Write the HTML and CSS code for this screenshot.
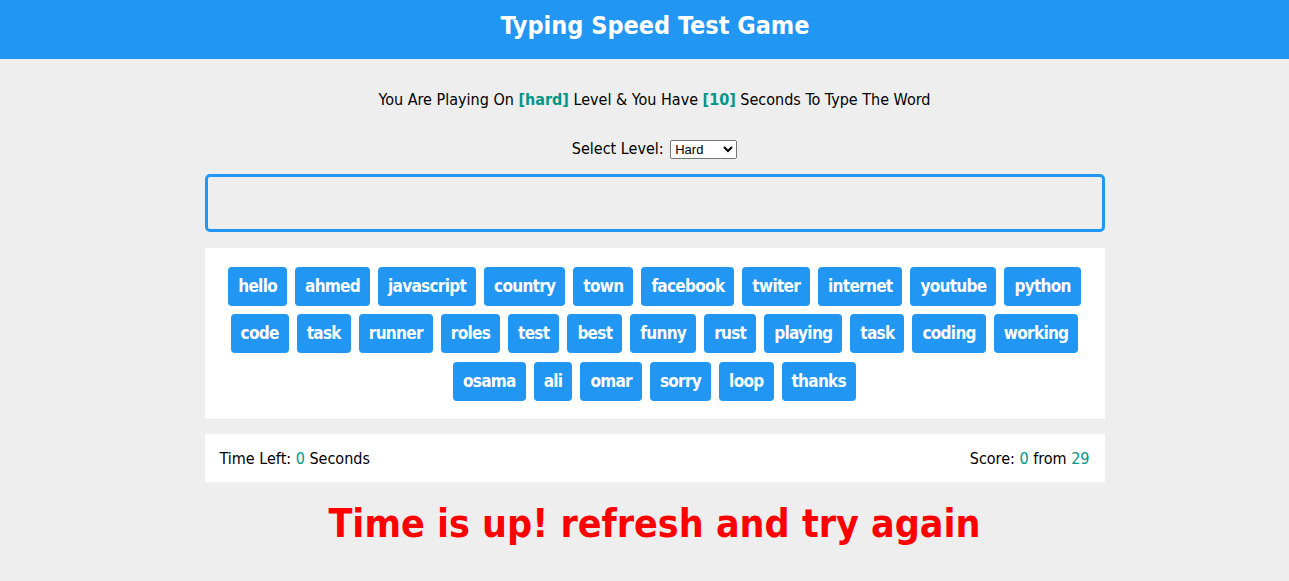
FILE: index.html
```html
<!DOCTYPE html>
<html lang="en">
<head>
<meta charset="UTF-8">
<title>Typing Speed Test Game</title>
<link rel="stylesheet" href="styles.css">
</head>
<body>
<header class="name">Typing Speed Test Game</header>
<main class="game">
  <p class="message">You Are Playing On <span class="lvl">[hard]</span> Level &amp; You Have <span class="seconds">[10]</span> Seconds To Type The Word</p>
  <div class="select-row">
    <label class="select-label" for="level">Select Level:</label>
    <select id="level" class="level-select">
      <option>Easy</option>
      <option>Normal</option>
      <option selected>Hard</option>
    </select>
  </div>
  <input class="input" type="text">
  <div class="upcoming-words">
    <span class="word">hello</span><span class="word">ahmed</span><span class="word">javascript</span><span class="word">country</span><span class="word">town</span><span class="word">facebook</span><span class="word">twiter</span><span class="word">internet</span><span class="word">youtube</span><span class="word">python</span><span class="word">code</span><span class="word">task</span><span class="word">runner</span><span class="word">roles</span><span class="word">test</span><span class="word">best</span><span class="word">funny</span><span class="word">rust</span><span class="word">playing</span><span class="word">task</span><span class="word">coding</span><span class="word">working</span><span class="word">osama</span><span class="word">ali</span><span class="word">omar</span><span class="word">sorry</span><span class="word">loop</span><span class="word">thanks</span>
  </div>
  <div class="control">
    <div class="time">Time Left: <span class="num">0</span> Seconds</div>
    <div class="score">Score: <span class="num">0</span> from <span class="num">29</span></div>
  </div>
  <div class="finish">Time is up! refresh and try again</div>
</main>
</body>
</html>
```
FILE: styles.css
```css
* { box-sizing: border-box; }
body {
  margin: 0;
  background: #eeeeee;
  font-family: Tahoma, "DejaVu Sans Condensed", "DejaVu Sans", sans-serif;
  color: #000;
}
.name {
  background: #2196f3;
  color: #fff;
  text-align: center;
  font-weight: bold;
  font-size: 25px;
  height: 59px;
  line-height: 52px;
  padding-left: 21px;
}
.game {
  width: 900px;
  margin-left: calc(50% - 440px);
  display: flex;
  flex-direction: column;
}
.message {
  margin: 31px 0 0;
  text-align: center;
  font-size: 16px;
  line-height: 20px;
}
.message .lvl, .message .seconds {
  color: #009688;
  font-weight: bold;
}
.select-row {
  margin-top: 29px;
  text-align: center;
  font-size: 16px;
  line-height: 20px;
}
.level-select {
  font-family: Arial, "Liberation Sans", sans-serif;
  font-size: 13px;
  width: 67px;
  height: 19px;
  margin-left: 2px;
  vertical-align: 0;
}
.input {
  margin-top: 15px;
  height: 58px;
  width: 900px;
  border: 3px solid #2196f3;
  border-radius: 5px;
  background: #eeeeee;
  outline: none;
}
.upcoming-words {
  margin-top: 16px;
  background: #fff;
  padding: 19px 20px 18px;
  display: flex;
  flex-wrap: wrap;
  justify-content: center;
  gap: 8px 8px;
  min-height: 171px;
}
.word {
  background: #2196f3;
  color: #fff;
  font-weight: bold;
  font-size: 17px;
  letter-spacing: -0.7px;
  height: 39px;
  line-height: 39px;
  padding: 0 10px;
  border-radius: 4px;
}
.control {
  margin-top: 15px;
  background: #fff;
  display: flex;
  justify-content: space-between;
  padding: 0 15px;
  height: 48px;
  align-items: center;
  font-size: 16px;
}
.num { color: #009688; }
.finish {
  margin-top: 20px;
  text-align: center;
  color: red;
  font-weight: bold;
  font-size: 39px;
  line-height: 44px;
}
```
